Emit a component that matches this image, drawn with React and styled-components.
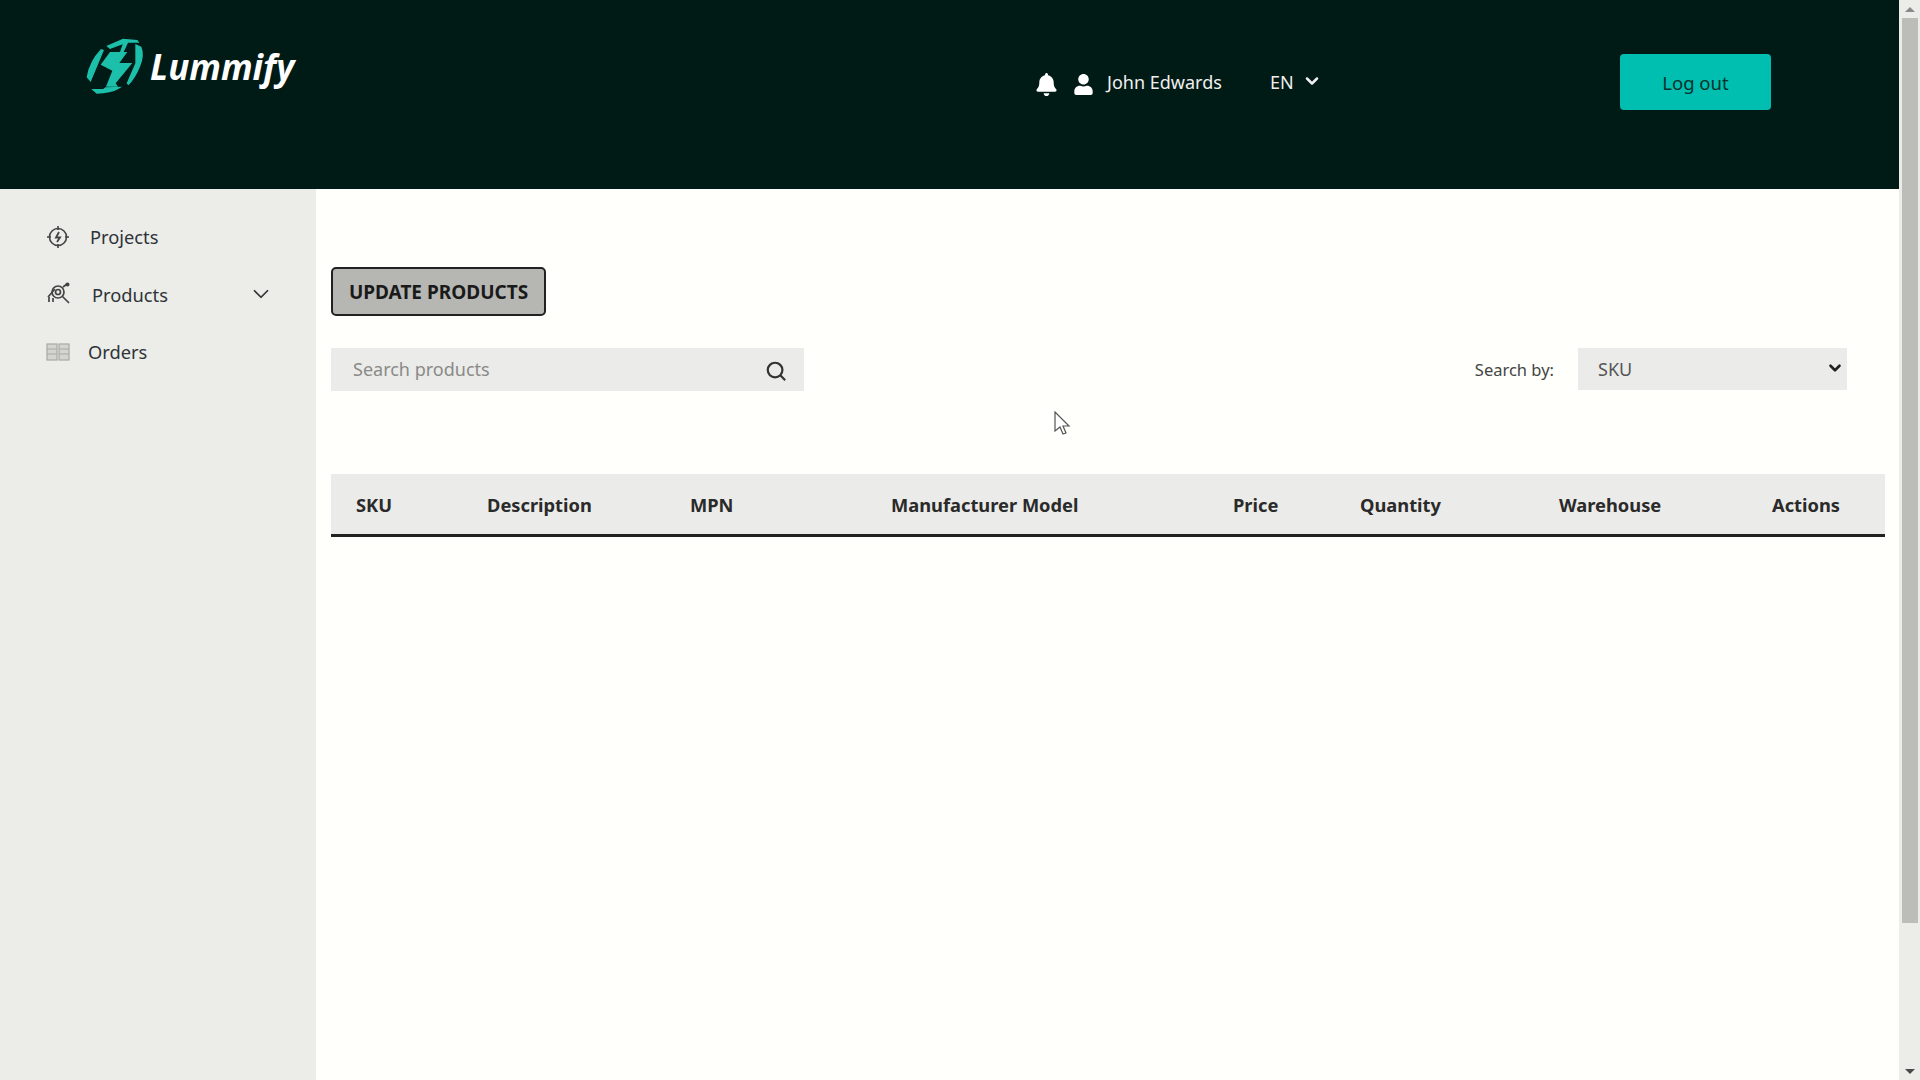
import React from 'react';
import styled, { createGlobalStyle } from 'styled-components';
import { FaBell, FaUser } from 'react-icons/fa';
import { FiChevronDown } from 'react-icons/fi';

const GlobalStyle = createGlobalStyle`
  html, body {
    margin: 0;
    padding: 0;
    height: 100%;
    overflow: hidden;
    background: #fffffb;
    font-family: 'Noto Sans', 'Open Sans', sans-serif;
    color: #222;
  }
`;

const Page = styled.div`
  display: flex;
  width: 1920px;
  height: 1080px;
`;

const Shell = styled.div`
  flex: 1;
  display: flex;
  flex-direction: column;
  min-width: 0;
`;

const ScrollTrack = styled.div`
  width: 21px;
  display: flex;
  flex-direction: column;
  align-items: center;
  background: #ecece9;
`;

const ScrollArrow = styled.div`
  height: 18px;
  flex: none;
  display: flex;
  align-items: center;
  justify-content: center;
  &::before {
    content: '';
    border-left: 5px solid transparent;
    border-right: 5px solid transparent;
    ${({ $down }) =>
      $down ? 'border-top: 5px solid #4a4a4a;' : 'border-bottom: 5px solid #8a8a88;'}
  }
`;

const ScrollThumb = styled.div`
  width: 16px;
  height: 905px;
  background: #bcbdb9;
`;

const ScrollRest = styled.div`
  flex: 1;
`;

const Header = styled.header`
  height: 189px;
  flex: none;
  background: #001a16;
  display: flex;
  align-items: flex-start;
  color: #f0f0ee;
`;

const Brand = styled.div`
  display: flex;
  align-items: flex-start;
  margin: 30px 0 0 78px;
  width: 956px;
`;

const BrandName = styled.span`
  font-size: 35px;
  line-height: 44px;
  font-weight: 700;
  font-style: italic;
  color: #fff;
  margin: 15px 0 0 -3px;
`;

const UserBar = styled.div`
  display: flex;
  align-items: center;
  height: 56px;
  margin-top: 54px;
  width: 586px;
  font-size: 18px;
`;

const BellIcon = styled(FaBell)`
  font-size: 23px;
  color: #fff;
  margin: 4px 14px 0 1px;
`;

const UserIcon = styled(FaUser)`
  font-size: 21px;
  color: #fff;
  margin: 4px 13px 0 1px;
`;

const UserName = styled.span`
  width: 163px;
  margin-bottom: 1px;
`;

const Lang = styled.span`
  margin-bottom: 1px;
`;

const LangChevron = styled(FiChevronDown)`
  font-size: 20px;
  stroke-width: 3;
  margin: 0 0 2px 8px;
`;

const LogoutButton = styled.button`
  width: 151px;
  height: 56px;
  margin-top: 54px;
  border: none;
  border-radius: 4px;
  background: #00bfb0;
  color: #08312c;
  font: inherit;
  font-size: 18.5px;
`;

const Body = styled.div`
  flex: 1;
  display: flex;
  min-height: 0;
`;

const Sidebar = styled.nav`
  width: 316px;
  flex: none;
  background: #ecece9;
  padding-top: 19px;
  box-sizing: border-box;
`;

const NavItem = styled.div`
  display: flex;
  align-items: center;
  height: 57.5px;
  padding-left: 46px;
  font-size: 18.3px;
  color: #2e3338;
`;

const NavIcon = styled.svg`
  width: 24px;
  height: 24px;
  flex: none;
  color: #444;
`;

const NavLabel = styled.span`
  margin-left: ${({ $gap }) => $gap}px;
  flex: ${({ $grow }) => ($grow ? 1 : 'none')};
`;

const NavChevron = styled(FiChevronDown)`
  font-size: 26px;
  stroke-width: 1.6;
  margin-right: 42px;
  color: #333;
`;

const Content = styled.main`
  flex: 1;
  min-width: 0;
  padding: 78px 14px 0 15px;
`;

const UpdateButton = styled.button`
  display: block;
  width: 215px;
  height: 49px;
  padding: 0;
  border: 2px solid #222;
  border-radius: 5px;
  background: #b6b6b2;
  color: #1a1a1a;
  font: inherit;
  font-size: 19px;
  font-weight: 700;
  box-sizing: border-box;
`;

const Toolbar = styled.div`
  display: flex;
  justify-content: space-between;
  align-items: flex-start;
  margin: 32px 0 0;
  padding-right: 38px;
`;

const SearchBox = styled.div`
  width: 473px;
  height: 43px;
  display: flex;
  align-items: center;
  justify-content: space-between;
  padding: 0 17px 0 22px;
  box-sizing: border-box;
  background: #ebebe9;
`;

const Placeholder = styled.span`
  font-size: 18px;
  color: #8a8a88;
  margin-bottom: 2px;
`;

const SearchIcon = styled.svg`
  width: 22px;
  height: 22px;
  margin-top: 3px;
  color: #333;
`;

const SearchBy = styled.div`
  display: flex;
  align-items: center;
  gap: 24px;
`;

const SearchLabel = styled.span`
  font-size: 16.5px;
  color: #444;
`;

const SelectBox = styled.div`
  width: 269px;
  height: 42px;
  display: flex;
  align-items: center;
  justify-content: space-between;
  padding: 0 3px 0 20px;
  box-sizing: border-box;
  background: #ebebe9;
  font-size: 18px;
  color: #555;
`;

const SelectChevron = styled(FiChevronDown)`
  font-size: 18px;
  stroke-width: 3.5;
  color: #222;
  margin-bottom: 2px;
`;

const TableHead = styled.div`
  display: grid;
  grid-template-columns: 131px 203px 201px 342px 127px 199px 213px 1fr;
  align-items: center;
  height: 63px;
  margin-top: 83px;
  padding-left: 25px;
  box-sizing: border-box;
  background: #ebebe9;
  border-bottom: 3px solid #222;
  font-size: 18.3px;
  font-weight: 700;
  color: #2a2a2a;
`;

const Cursor = styled.svg`
  position: absolute;
  left: 1054px;
  top: 411px;
  width: 18px;
  height: 24px;
`;

const COLUMNS = ['SKU', 'Description', 'MPN', 'Manufacturer Model', 'Price', 'Quantity', 'Warehouse', 'Actions'];

function LogoMark() {
  return (
    <svg width="75" height="70" viewBox="0 0 225 210" fill="#1cc0aa">
      <path d="M85 48 L135 26 L178 30 L184 38 L150 38 L137 66 L126 66 L134 43 L96 57Z" />
      <path d="M69 57 L78 60 L38 156 L26 142 Q33 95 69 57Z" />
      <path d="M172 42 L190 50 Q201 75 186 110 Q172 145 151 166 L146 160 L172 100Z" />
      <path d="M96 66 L148 66 L124 99 L163 99 L113 160 L120 170 L84 170 L103 122 L68 104Z" />
      <path d="M40 177 L76 177 L82 172 L132 170 L120 178 Q100 190 56 191Z" />
    </svg>
  );
}

function ProjectsIcon() {
  return (
    <NavIcon viewBox="0 0 24 24" fill="none" stroke="currentColor" strokeWidth="1.6">
      <circle cx="12" cy="12" r="8.5" />
      <path d="M12 1v4M12 19v4M1 12h4M19 12h4" />
      <path d="M13 7l-3 5.5h4L11 17" strokeWidth="1.8" />
    </NavIcon>
  );
}

function ProductsIcon() {
  return (
    <NavIcon viewBox="0 0 24 24" fill="none" stroke="currentColor" strokeWidth="1.7">
      <circle cx="12" cy="10" r="6" />
      <circle cx="12" cy="10" r="2.5" />
      <path d="M16.5 14.5L23 21M17 5l4-3M2 15l7-8M3 15v5M7 16v4" />
      <circle cx="21.5" cy="2.5" r="1.2" fill="currentColor" />
    </NavIcon>
  );
}

function OrdersIcon() {
  return (
    <NavIcon viewBox="0 0 24 24" fill="#d4d4d1" stroke="#a8a8a5" strokeWidth="1.2">
      <rect x="1" y="4" width="10" height="16" />
      <rect x="13" y="4" width="10" height="16" />
      <path d="M1 9h10M1 14h10M13 9h10M13 14h10" />
    </NavIcon>
  );
}

export default function App() {
  return (
    <>
      <GlobalStyle />
      <Page>
        <Shell>
          <Header>
            <Brand>
              <LogoMark />
              <BrandName>Lummify</BrandName>
            </Brand>
            <UserBar>
              <BellIcon />
              <UserIcon />
              <UserName>John Edwards</UserName>
              <Lang>EN</Lang>
              <LangChevron />
            </UserBar>
            <LogoutButton>Log out</LogoutButton>
          </Header>
          <Body>
            <Sidebar>
              <NavItem>
                <ProjectsIcon />
                <NavLabel $gap={20}>Projects</NavLabel>
              </NavItem>
              <NavItem>
                <ProductsIcon />
                <NavLabel $gap={22} $grow>Products</NavLabel>
                <NavChevron />
              </NavItem>
              <NavItem>
                <OrdersIcon />
                <NavLabel $gap={18}>Orders</NavLabel>
              </NavItem>
            </Sidebar>
            <Content>
              <UpdateButton>UPDATE PRODUCTS</UpdateButton>
              <Toolbar>
                <SearchBox>
                  <Placeholder>Search products</Placeholder>
                  <SearchIcon viewBox="0 0 24 24" fill="none" stroke="currentColor" strokeWidth="2.4">
                    <circle cx="11" cy="11" r="8" />
                    <path d="M17 17l5 5" />
                  </SearchIcon>
                </SearchBox>
                <SearchBy>
                  <SearchLabel>Search by:</SearchLabel>
                  <SelectBox>
                    SKU
                    <SelectChevron />
                  </SelectBox>
                </SearchBy>
              </Toolbar>
              <TableHead>
                {COLUMNS.map((c) => (
                  <span key={c}>{c}</span>
                ))}
              </TableHead>
            </Content>
          </Body>
        </Shell>
        <ScrollTrack>
          <ScrollArrow />
          <ScrollThumb />
          <ScrollRest />
          <ScrollArrow $down />
        </ScrollTrack>
      </Page>
      <Cursor viewBox="0 0 18 24">
        <path d="M1 1v19l5-4 3 7 3-1-3-7h6z" fill="#fff" stroke="#555" strokeWidth="1.2" />
      </Cursor>
    </>
  );
}
